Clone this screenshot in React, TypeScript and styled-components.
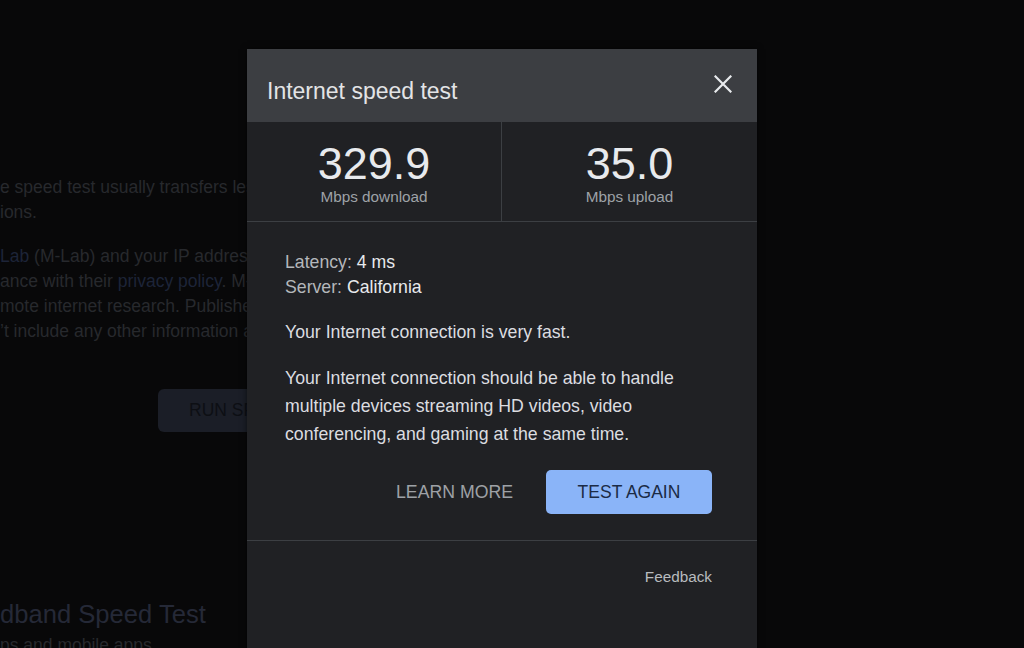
import React from "react";
import styled, { createGlobalStyle } from "styled-components";

const GlobalStyle = createGlobalStyle`
  html, body {
    margin: 0;
    padding: 0;
    background: #080809;
    font-family: "Liberation Sans", Arial, sans-serif;
    overflow: hidden;
  }
  * { box-sizing: border-box; }
`;

const Page = styled.main`
  position: relative;
  width: 1024px;
  height: 648px;
  overflow: hidden;
  background: #080809;
`;

const Backdrop = styled.section`
  display: flex;
  flex-direction: column;
  align-items: flex-start;
  padding-top: 175px;
  width: 246px;
`;

const BgPara = styled.div`
  font-size: 17.5px;
  line-height: 25px;
  color: #27292d;
  white-space: nowrap;
  margin-bottom: 19px;
`;

const BgLink = styled.span`
  color: #1d2438;
`;

const RunButton = styled.div`
  margin-left: 158px;
  margin-top: 26px;
  height: 43px;
  width: 120px;
  padding-left: 31px;
  display: flex;
  align-items: center;
  border-radius: 6px;
  background: #1b1e27;
  color: #0d0f14;
  font-size: 17.5px;
  white-space: nowrap;
`;

const BgHeading = styled.h2`
  margin: 166px 0 0;
  font-size: 25.6px;
  line-height: 32px;
  font-weight: 400;
  color: #252937;
  white-space: nowrap;
`;

const BgSub = styled.div`
  margin-top: 3px;
  font-size: 17.5px;
  line-height: 25px;
  color: #27292d;
  white-space: nowrap;
`;

const Dialog = styled.div`
  position: absolute;
  left: 247px;
  top: 49px;
  width: 510px;
  height: 620px;
  background: #202124;
  display: flex;
  flex-direction: column;
  box-shadow: 0 0 6px rgba(0, 0, 0, 0.6);
`;

const Header = styled.header`
  height: 73px;
  flex: none;
  background: #3c3e42;
  display: flex;
  justify-content: space-between;
  align-items: flex-start;
  padding: 0 25px 0 20px;
`;

const Title = styled.h1`
  margin: 28px 0 0;
  font-size: 23px;
  line-height: 28px;
  font-weight: 400;
  color: #e3e4e6;
`;

const CloseButton = styled.button`
  margin-top: 26px;
  width: 18px;
  height: 18px;
  padding: 0;
  border: none;
  background: transparent;
  display: flex;
  color: #e8eaed;
  cursor: pointer;
`;

const Stats = styled.div`
  display: grid;
  grid-template-columns: 255px 1fr;
  height: 100px;
  flex: none;
  border-bottom: 1px solid #3c3f43;
`;

const Stat = styled.div<{ $divider?: boolean }>`
  display: flex;
  flex-direction: column;
  align-items: center;
  padding-top: 17px;
  border-right: ${(p) => (p.$divider ? "1px solid #3c3f43" : "none")};
`;

const StatValue = styled.div`
  font-size: 45px;
  line-height: 50px;
  color: #e8eaed;
`;

const StatLabel = styled.div`
  font-size: 15.3px;
  line-height: 16px;
  color: #9ea2a7;
`;

const Body = styled.div`
  padding: 28px 45px 0 38px;
  display: flex;
  flex-direction: column;
`;

const InfoLine = styled.div`
  font-size: 17.7px;
  line-height: 25px;
  color: #b4b7bb;
`;

const InfoValue = styled.span`
  color: #e8eaed;
`;

const Paragraph = styled.p<{ $gap: number }>`
  margin: ${(p) => p.$gap}px 0 0;
  font-size: 17.7px;
  line-height: 28px;
  color: #dcdde0;
`;

const Actions = styled.div`
  display: flex;
  justify-content: flex-end;
  align-items: center;
  gap: 33px;
  margin-top: 22px;
`;

const TextButton = styled.button`
  border: none;
  background: transparent;
  padding: 0;
  font-family: inherit;
  font-size: 17.7px;
  color: #9ea1a6;
  cursor: pointer;
`;

const PrimaryButton = styled.button`
  width: 166px;
  height: 44px;
  border: none;
  border-radius: 5px;
  background: #8ab4f8;
  font-family: inherit;
  font-size: 17.5px;
  color: #1b2b45;
  cursor: pointer;
`;

const Rule = styled.hr`
  margin: 26px 0 0;
  border: none;
  border-top: 1px solid #3c3f43;
  height: 0;
`;

const Footer = styled.div`
  display: flex;
  justify-content: flex-end;
  padding: 26px 45px 0 38px;
`;

const FeedbackLink = styled.a`
  font-size: 15.3px;
  line-height: 20px;
  color: #b8bbbf;
  text-decoration: none;
`;

export default function App() {
  return (
    <>
      <GlobalStyle />
      <Page>
        <Backdrop>
          <BgPara>
            e speed test usually transfers less than 40 MB of data
            <br />
            ions.
          </BgPara>
          <BgPara>
            <BgLink>Lab</BgLink> (M-Lab) and your IP address are shared
            <br />
            ance with their <BgLink>privacy policy</BgLink>. M-Lab conducts
            <br />
            mote internet research. Published data
            <br />
            ’t include any other information about you.
          </BgPara>
          <RunButton>RUN SPEED TEST</RunButton>
          <BgHeading>dband Speed Test</BgHeading>
          <BgSub>ps and mobile apps</BgSub>
        </Backdrop>

        <Dialog role="dialog" aria-label="Internet speed test">
          <Header>
            <Title>Internet speed test</Title>
            <CloseButton aria-label="Close">
              <svg width="18" height="18" viewBox="0 0 18 18">
                <path
                  d="M1.5 1.5 L16.5 16.5 M16.5 1.5 L1.5 16.5"
                  stroke="currentColor"
                  strokeWidth="2.2"
                  strokeLinecap="square"
                />
              </svg>
            </CloseButton>
          </Header>
          <Stats>
            <Stat $divider>
              <StatValue>329.9</StatValue>
              <StatLabel>Mbps download</StatLabel>
            </Stat>
            <Stat>
              <StatValue>35.0</StatValue>
              <StatLabel>Mbps upload</StatLabel>
            </Stat>
          </Stats>
          <Body>
            <InfoLine>
              Latency: <InfoValue>4 ms</InfoValue>
            </InfoLine>
            <InfoLine>
              Server: <InfoValue>California</InfoValue>
            </InfoLine>
            <Paragraph $gap={18}>Your Internet connection is very fast.</Paragraph>
            <Paragraph $gap={18}>
              Your Internet connection should be able to handle multiple devices
              streaming HD videos, video conferencing, and gaming at the same
              time.
            </Paragraph>
            <Actions>
              <TextButton>LEARN MORE</TextButton>
              <PrimaryButton>TEST AGAIN</PrimaryButton>
            </Actions>
          </Body>
          <Rule />
          <Footer>
            <FeedbackLink href="#">Feedback</FeedbackLink>
          </Footer>
        </Dialog>
      </Page>
    </>
  );
}
